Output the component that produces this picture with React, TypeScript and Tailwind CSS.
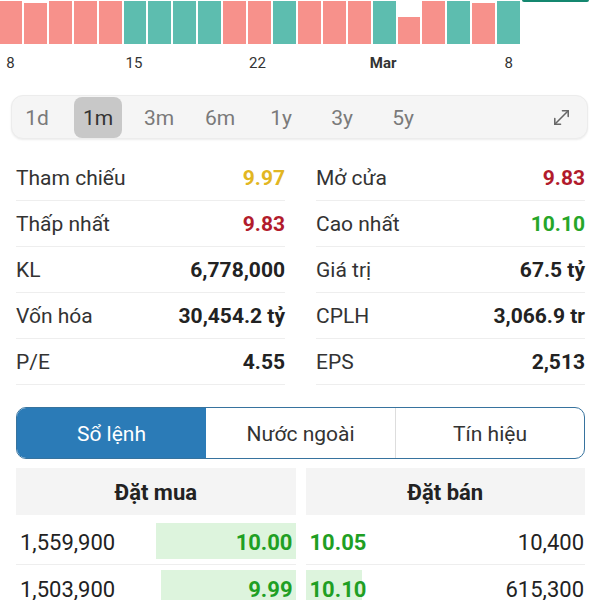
import React from "react";
import { MoveDiagonal } from "lucide-react";

const PINK = "#f7918b";
const TEAL = "#5dbdaf";

// color + height of each volume bar
const bars: { c: string; h: number }[] = [
  { c: PINK, h: 43 },
  { c: PINK, h: 41 },
  { c: PINK, h: 43 },
  { c: PINK, h: 43 },
  { c: PINK, h: 43 },
  { c: TEAL, h: 43 },
  { c: TEAL, h: 43 },
  { c: TEAL, h: 43 },
  { c: TEAL, h: 43 },
  { c: PINK, h: 43 },
  { c: PINK, h: 43 },
  { c: TEAL, h: 43 },
  { c: PINK, h: 43 },
  { c: PINK, h: 43 },
  { c: PINK, h: 43 },
  { c: TEAL, h: 43 },
  { c: PINK, h: 27 },
  { c: PINK, h: 43 },
  { c: TEAL, h: 43 },
  { c: PINK, h: 41 },
  { c: TEAL, h: 43 },
];

const axis: Record<number, { t: string; bold?: boolean }> = {
  0: { t: "8" },
  5: { t: "15" },
  10: { t: "22" },
  15: { t: "Mar", bold: true },
  20: { t: "8" },
};

const ranges = ["1d", "1m", "3m", "6m", "1y", "3y", "5y"];

const stats: [string, string, string, string, string, string][] = [
  ["Tham chiếu", "9.97", "text-[#e2b622]", "Mở cửa", "9.83", "text-[#b21b2c]"],
  ["Thấp nhất", "9.83", "text-[#b21b2c]", "Cao nhất", "10.10", "text-[#26a629]"],
  ["KL", "6,778,000", "text-[#222]", "Giá trị", "67.5 tỷ", "text-[#222]"],
  ["Vốn hóa", "30,454.2 tỷ", "text-[#222]", "CPLH", "3,066.9 tr", "text-[#222]"],
  ["P/E", "4.55", "text-[#222]", "EPS", "2,513", "text-[#222]"],
];

const orders = [
  { bq: "1,559,900", bp: "10.00", bw: 140, sp: "10.05", sw: 0, sq: "10,400" },
  { bq: "1,503,900", bp: "9.99", bw: 135, sp: "10.10", sw: 56, sq: "615,300" },
];

export default function App() {
  return (
    <div className="w-[600px] h-[600px] overflow-hidden bg-white font-['Roboto','Liberation_Sans',sans-serif] text-[#222]">
      {/* volume chart */}
      <div className="flex h-[44px]">
        <div className="flex w-[521px] -ml-[1px] items-end gap-[2px]">
          {bars.map((b, i) => (
            <div key={i} className="flex-1" style={{ height: b.h, background: b.c }} />
          ))}
        </div>
        <div className="ml-[2px] w-[67px] h-[2px] rounded-b-[3px] bg-[#14876f] self-start" />
      </div>

      {/* axis */}
      <div className="flex w-[521px] -ml-[1px] gap-[2px] mt-[9px] h-[20px] items-center text-[15px] text-[#333]">
        {bars.map((_, i) => (
          <div key={i} className="flex-1 flex justify-center whitespace-nowrap">
            {axis[i] ? <span className={axis[i].bold ? "font-bold" : ""}>{axis[i].t}</span> : null}
          </div>
        ))}
      </div>

      {/* range selector */}
      <div className="mt-[22px] ml-[11px] mr-[12px] h-[44px] flex items-center pl-[1px] pr-[14px] gap-[13px] rounded-[12px] bg-[#f5f5f5] border border-[#ececec] shadow-[0_1px_2px_rgba(0,0,0,0.08)]">
        {ranges.map((r) => (
          <div
            key={r}
            className={
              "w-[48px] h-[41px] pt-[3px] flex items-center justify-center rounded-[8px] text-[21px] " +
              (r === "1m" ? "bg-[#c8c8c8] text-[#333]" : "text-[#7a7a7a]")
            }
          >
            {r}
          </div>
        ))}
        <div className="ml-auto text-[#666]">
          <MoveDiagonal size={23} strokeWidth={1.6} />
        </div>
      </div>

      {/* stats */}
      <div className="mt-[16px] pl-4 pr-[15px] grid grid-cols-2 gap-x-[31px]">
        {stats.map(([l1, v1, c1, l2, v2, c2]) => (
          <React.Fragment key={l1}>
            <div className="h-[46px] pt-[2px] flex items-center justify-between border-b border-[#eeeeee] text-[21px]">
              <span className="text-[#333]">{l1}</span>
              <span className={"font-bold " + c1}>{v1}</span>
            </div>
            <div className="h-[46px] pt-[2px] flex items-center justify-between border-b border-[#eeeeee] text-[21px]">
              <span className="text-[#333]">{l2}</span>
              <span className={"font-bold " + c2}>{v2}</span>
            </div>
          </React.Fragment>
        ))}
      </div>

      {/* tabs */}
      <div className="mt-[22px] ml-4 mr-[15px] h-[52px] grid grid-cols-3 rounded-[10px] border-[1.5px] border-[#37739e] overflow-hidden text-[21px]">
        <div className="pt-[4px] flex items-center justify-center bg-[#2b7bb7] text-white">Sổ lệnh</div>
        <div className="pt-[4px] flex items-center justify-center text-[#333]">Nước ngoài</div>
        <div className="pt-[4px] flex items-center justify-center text-[#333] border-l border-[#dddddd]">Tín hiệu</div>
      </div>

      {/* order book */}
      <div className="mt-[9px] ml-4 mr-[15px] grid grid-cols-2 gap-x-[10px]">
        <div className="h-[47px] pt-[2px] flex items-center justify-center bg-[#f4f4f4] font-bold text-[22px]">Đặt mua</div>
        <div className="h-[47px] pt-[2px] flex items-center justify-center bg-[#f4f4f4] font-bold text-[22px]">Đặt bán</div>
      </div>
      <div className="mt-[3px] ml-4 mr-[15px] grid grid-cols-2 gap-x-[10px] text-[22px]">
        {orders.map((o) => (
          <React.Fragment key={o.bq}>
            <div className="h-[47px] flex items-center justify-between border-b border-[#eeeeee]">
              <span className="pl-[4px] pt-[3px] text-[#222]">{o.bq}</span>
              <div
                className="h-[36px] pt-[3px] flex items-center justify-end pr-[3px] bg-[#ddf4dd] font-bold text-[#1f9f24]"
                style={{ width: o.bw }}
              >
                {o.bp}
              </div>
            </div>
            <div className="h-[47px] flex items-center justify-between border-b border-[#eeeeee]">
              <div className="h-[36px] flex items-center" style={{ width: o.sw || undefined }}>
                <span
                  className={"h-[36px] pt-[3px] flex items-center pl-[4px] font-bold text-[#1f9f24] " + (o.sw ? "w-full bg-[#ddf4dd]" : "")}
                >
                  {o.sp}
                </span>
              </div>
              <span className="pr-[1px] pt-[3px] text-[#222]">{o.sq}</span>
            </div>
          </React.Fragment>
        ))}
      </div>
    </div>
  );
}
